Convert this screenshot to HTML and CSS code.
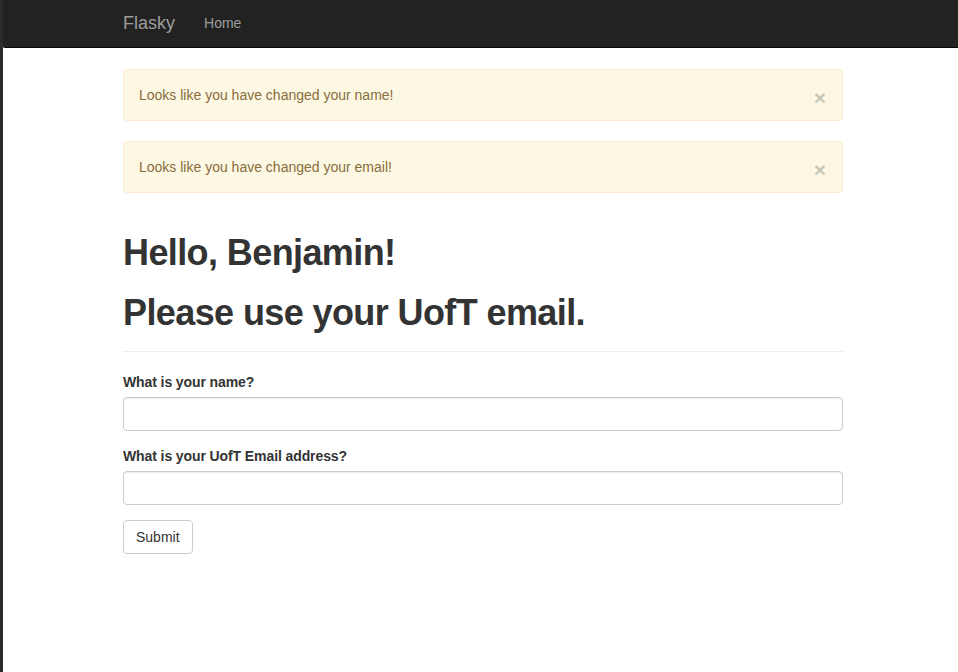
FILE: index.html
```html
<!DOCTYPE html>
<html lang="en">
<head>
<meta charset="utf-8">
<title>Flasky</title>
<link rel="stylesheet" href="styles.css">
</head>
<body>
<div class="frame">
  <nav class="navbar">
    <div class="container nav-inner">
      <a class="brand" href="#">Flasky</a>
      <a class="nav-link" href="#">Home</a>
    </div>
  </nav>
  <main class="container">
    <div class="alert"><span>Looks like you have changed your name!</span><span class="close">&times;</span></div>
    <div class="alert"><span>Looks like you have changed your email!</span><span class="close">&times;</span></div>
    <div class="page-header">
      <h1>Hello, Benjamin!</h1>
      <h1>Please use your UofT email.</h1>
    </div>
    <form class="form">
      <div class="form-group">
        <label for="name">What is your name?</label>
        <input id="name" class="form-control" type="text">
      </div>
      <div class="form-group">
        <label for="email">What is your UofT Email address?</label>
        <input id="email" class="form-control" type="text">
      </div>
      <button type="button" class="btn">Submit</button>
    </form>
  </main>
</div>
</body>
</html>
```
FILE: styles.css
```css
* { box-sizing: border-box; }
html, body { margin: 0; padding: 0; height: 100%; }
body {
  background: #2b2b2b;
  font-family: "Liberation Sans", Arial, sans-serif;
  font-size: 14px;
  line-height: 1.42857;
  color: #333;
}
.frame {
  margin-left: 3px;
  min-height: 100%;
  background: #fff;
  overflow: hidden;
}
.container {
  width: 720px;
  margin-left: 120px;
}
.navbar {
  height: 48px;
  background: #222;
  border-bottom: 1px solid #080808;
  border-bottom-left-radius: 2px;
  margin-bottom: 21px;
}
.nav-inner {
  display: flex;
  align-items: center;
  height: 47px;
}
.brand {
  color: #9d9d9d;
  font-size: 18px;
  text-decoration: none;
  margin-right: 29px;
}
.nav-link {
  color: #9d9d9d;
  font-size: 14px;
  text-decoration: none;
}
.alert {
  display: flex;
  justify-content: space-between;
  align-items: center;
  padding: 15px;
  margin-bottom: 20px;
  background: #fcf8e3;
  border: 1px solid #faebcc;
  border-radius: 4px;
  color: #8a6d3b;
  line-height: 20px;
  height: 52px;
}
.close {
  font-size: 21px;
  font-weight: bold;
  color: #000;
  opacity: 0.2;
  line-height: 1;
  margin-right: 1px;
  margin-top: 4px;
}
.page-header {
  margin-top: 40px;
  padding-bottom: 9px;
  border-bottom: 1px solid #eee;
  margin-bottom: 20px;
}
h1 {
  font-size: 36px;
  font-weight: bold;
  line-height: 1.1;
  margin: 0 0 10px;
  letter-spacing: -0.6px;
}
h1 + h1 { margin-top: 20px; }
.form-group { margin-bottom: 15px; }
label {
  display: inline-block;
  font-weight: bold;
  margin-bottom: 5px;
  line-height: 20px;
  letter-spacing: -0.1px;
}
.form-control {
  display: block;
  width: 100%;
  height: 34px;
  padding: 6px 12px;
  border: 1px solid #ccc;
  border-radius: 4px;
  background: #fff;
  box-shadow: inset 0 1px 1px rgba(0,0,0,.075);
  font: inherit;
}
.btn {
  height: 34px;
  padding: 6px 12px;
  font: inherit;
  color: #333;
  background: #fff;
  border: 1px solid #ccc;
  border-radius: 4px;
  line-height: 20px;
}
```
